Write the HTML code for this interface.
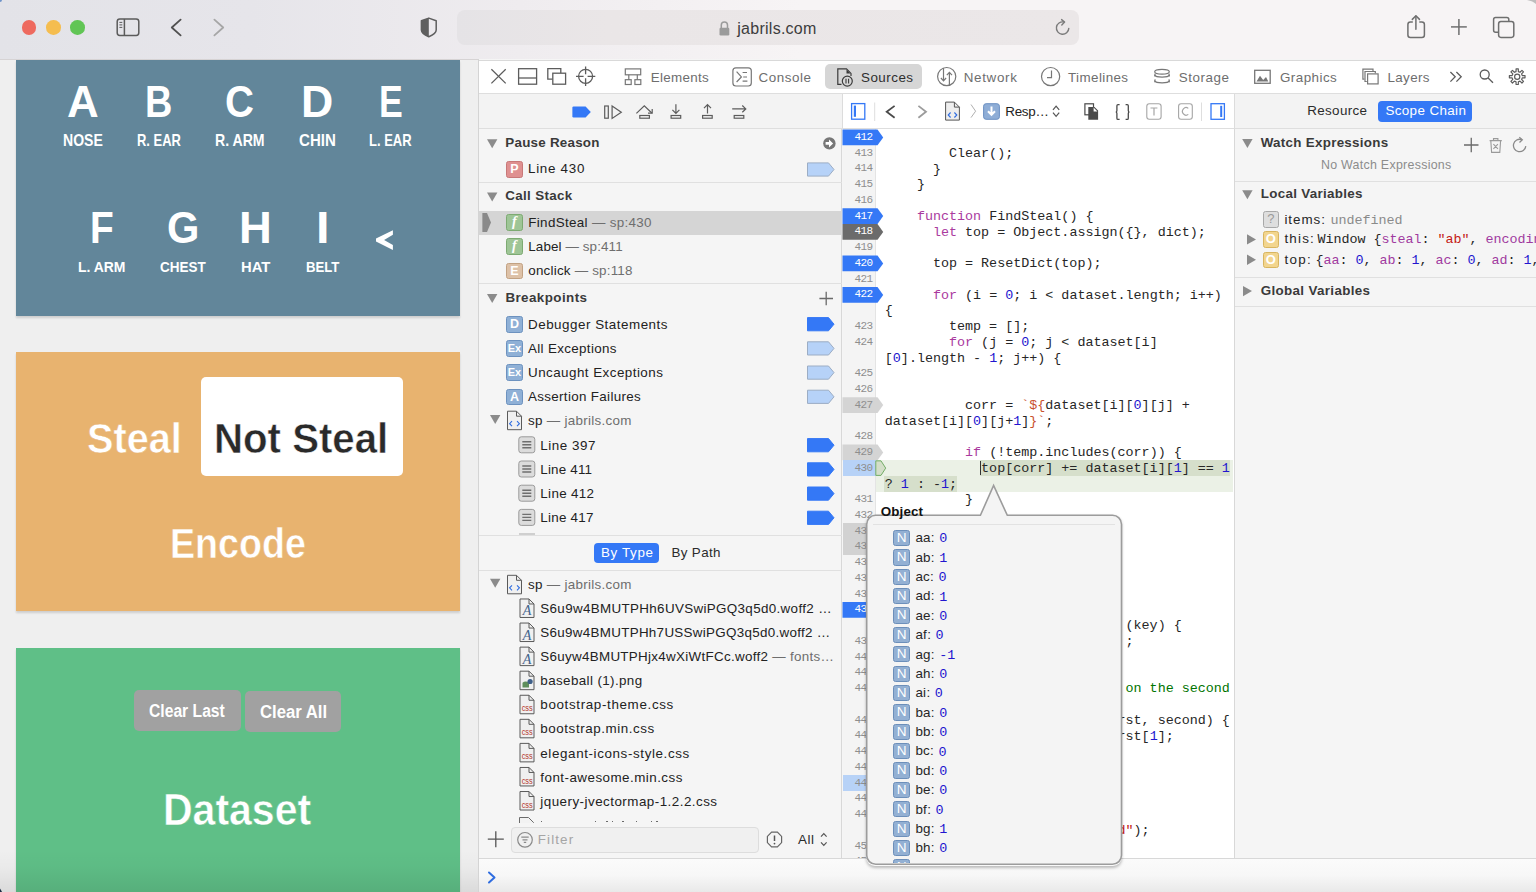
<!DOCTYPE html>
<html><head><meta charset="utf-8"><title>jabrils.com</title>
<style>
*{box-sizing:border-box;margin:0;padding:0}
html,body{width:1536px;height:892px;overflow:hidden;background:#efefef;font-family:"Liberation Sans",sans-serif;position:relative}
.a{position:absolute}
.t{position:absolute;white-space:pre;line-height:1}
svg{position:absolute;overflow:visible}
</style></head><body>

<div class="a" style="left:0;top:0;width:1536px;height:59px;background:linear-gradient(90deg,#e3e3e8 0px,#e6e5ea 250px,#efecef 520px,#f7f4f5 800px,#f7f4f5 1536px)"></div>
<div class="a" style="left:0;top:58.5px;width:1536px;height:1px;background:#d6d3d4"></div>
<div class="a" style="left:21.80px;top:20.4px;width:14.6px;height:14.6px;border-radius:50%;background:#ee6a5f"></div>
<div class="a" style="left:46.00px;top:20.4px;width:14.6px;height:14.6px;border-radius:50%;background:#f5bd4f"></div>
<div class="a" style="left:70.10px;top:20.4px;width:14.6px;height:14.6px;border-radius:50%;background:#61c555"></div>
<svg style="left:0;top:0" width="1536" height="59"><rect x="117.2" y="19" width="21.6" height="16.4" rx="2.6" fill="none" stroke="#5b5b5b" stroke-width="1.5"/><line x1="124.4" y1="19" x2="124.4" y2="35.4" stroke="#5b5b5b" stroke-width="1.5"/><line x1="119.4" y1="22.4" x2="122.3" y2="22.4" stroke="#5b5b5b" stroke-width="1"/><line x1="119.4" y1="24.9" x2="122.3" y2="24.9" stroke="#5b5b5b" stroke-width="1"/><line x1="119.4" y1="27.4" x2="122.3" y2="27.4" stroke="#5b5b5b" stroke-width="1"/><polyline points="180.6,19.6 171.8,27.5 180.6,35.3" fill="none" stroke="#505050" stroke-width="1.8" stroke-linecap="round" stroke-linejoin="round"/><polyline points="214.4,19.6 223.2,27.5 214.4,35.3" fill="none" stroke="#a6a6a6" stroke-width="1.8" stroke-linecap="round" stroke-linejoin="round"/><path d="M428.8,18.1 L421.4,20.7 V30.1 C421.4,32.7 424.6,35.1 428.8,36.8 C433,35.1 436.2,32.7 436.2,30.1 V20.7 Z" fill="none" stroke="#5f5f5f" stroke-width="1.5" stroke-linejoin="round"/><path d="M428.8,18.1 L421.4,20.7 V30.1 C421.4,32.7 424.6,35.1 428.8,36.8 Z" fill="#5f5f5f"/></svg>
<div class="a" style="left:456.5px;top:10.4px;width:622px;height:34.2px;border-radius:8px;background:linear-gradient(90deg,#e5e3e6,#eae6e7 150px,#ebe7e8)"></div>
<svg style="left:0;top:0" width="1536" height="59"><path d="M721.3,28 V25 A3.1,3.1 0 0 1 727.5,25 V28" fill="none" stroke="#9b9b9b" stroke-width="1.5"/><rect x="719.5" y="27.8" width="9.8" height="7.8" rx="1.3" fill="#9b9b9b"/><path d="M1068.8,28.4 A6.2,6.2 0 1 1 1063.8,22" fill="none" stroke="#7b7b7b" stroke-width="1.4" stroke-linecap="round"/><polyline points="1061.6,19.6 1064.6,22.1 1061.8,24.9" fill="none" stroke="#7b7b7b" stroke-width="1.4" stroke-linecap="round" stroke-linejoin="round"/><path d="M1412.8,21.9 H1410.4 A2.5,2.5 0 0 0 1407.9,24.4 V35 A2.5,2.5 0 0 0 1410.4,37.5 H1421.9 A2.5,2.5 0 0 0 1424.4,35 V24.4 A2.5,2.5 0 0 0 1421.9,21.9 H1419.3" fill="none" stroke="#6f6f6f" stroke-width="1.5"/><line x1="1415.9" y1="16.2" x2="1415.9" y2="29.2" stroke="#6f6f6f" stroke-width="1.5" stroke-linecap="round"/><polyline points="1412.3,19.4 1415.9,15.8 1419.5,19.4" fill="none" stroke="#6f6f6f" stroke-width="1.5" stroke-linecap="round" stroke-linejoin="round"/><line x1="1451" y1="26.9" x2="1466.8" y2="26.9" stroke="#6f6f6f" stroke-width="1.5"/><line x1="1458.9" y1="18.9" x2="1458.9" y2="34.9" stroke="#6f6f6f" stroke-width="1.5"/><path d="M1498.2,32.3 H1495.6 A2,2 0 0 1 1493.6,30.3 V19.5 A2,2 0 0 1 1495.6,17.5 H1506.8 A2,2 0 0 1 1508.8,19.5 V21.4" fill="none" stroke="#6f6f6f" stroke-width="1.5"/><rect x="1498.6" y="21.6" width="15.2" height="15.8" rx="2.3" fill="none" stroke="#6f6f6f" stroke-width="1.5"/></svg>
<div class="t" style="left:737.30px;top:21.16px;font-size:16px;color:#3d3d3d;letter-spacing:0.260px;">jabrils.com</div>
<div class="a" style="left:16px;top:59.5px;width:444px;height:256.5px;background:#62869a;box-shadow:0 1.5px 2px rgba(0,0,0,0.14)"></div>
<div class="a" style="left:16px;top:352px;width:444px;height:259px;background:#e8b36f;box-shadow:0 1.5px 2px rgba(0,0,0,0.14)"></div>
<div class="a" style="left:16px;top:647.6px;width:444px;height:260px;background:#5fbf87;box-shadow:0 1.5px 2px rgba(0,0,0,0.14)"></div>
<div class="t" style="left:66.51px;top:79.95px;font-size:44.48px;color:#fff;font-weight:700;transform:scaleX(0.9886);transform-origin:0 0;">A</div>
<div class="t" style="left:145.17px;top:79.95px;font-size:44.48px;color:#fff;font-weight:700;transform:scaleX(0.8516);transform-origin:0 0;">B</div>
<div class="t" style="left:224.96px;top:79.95px;font-size:44.48px;color:#fff;font-weight:700;transform:scaleX(0.9010);transform-origin:0 0;">C</div>
<div class="t" style="left:300.91px;top:79.95px;font-size:44.48px;color:#fff;font-weight:700;transform:scaleX(1.0045);transform-origin:0 0;">D</div>
<div class="t" style="left:378.92px;top:79.95px;font-size:44.48px;color:#fff;font-weight:700;transform:scaleX(0.8015);transform-origin:0 0;">E</div>
<div class="t" style="left:62.76px;top:132.57px;font-size:16.57px;color:#fff;font-weight:700;transform:scaleX(0.8473);transform-origin:0 0;">NOSE</div>
<div class="t" style="left:136.63px;top:132.57px;font-size:16.57px;color:#fff;font-weight:700;transform:scaleX(0.7805);transform-origin:0 0;">R. EAR</div>
<div class="t" style="left:214.66px;top:132.57px;font-size:16.57px;color:#fff;font-weight:700;transform:scaleX(0.8506);transform-origin:0 0;">R. ARM</div>
<div class="t" style="left:298.58px;top:132.57px;font-size:16.57px;color:#fff;font-weight:700;transform:scaleX(0.9094);transform-origin:0 0;">CHIN</div>
<div class="t" style="left:369.43px;top:132.57px;font-size:16.57px;color:#fff;font-weight:700;transform:scaleX(0.7831);transform-origin:0 0;">L. EAR</div>
<div class="t" style="left:89.70px;top:206.00px;font-size:44.19px;color:#fff;font-weight:700;transform:scaleX(0.8788);transform-origin:0 0;">F</div>
<div class="t" style="left:166.59px;top:206.00px;font-size:44.19px;color:#fff;font-weight:700;transform:scaleX(0.9424);transform-origin:0 0;">G</div>
<div class="t" style="left:239.26px;top:206.00px;font-size:44.19px;color:#fff;font-weight:700;transform:scaleX(1.0278);transform-origin:0 0;">H</div>
<div class="t" style="left:315.75px;top:206.00px;font-size:44.19px;color:#fff;font-weight:700;transform:scaleX(1.1000);transform-origin:0 0;">I</div>
<svg style="left:0;top:0" width="1" height="1"><polygon points="392.9,230.2 392.9,234.8 384.1,240.1 392.9,245.0 392.9,249.9 376,241.6 376,238.6" fill="#fff"/></svg>
<div class="t" style="left:77.87px;top:258.96px;font-size:15.41px;color:#fff;font-weight:700;transform:scaleX(0.9043);transform-origin:0 0;">L. ARM</div>
<div class="t" style="left:159.75px;top:258.96px;font-size:15.41px;color:#fff;font-weight:700;transform:scaleX(0.8751);transform-origin:0 0;">CHEST</div>
<div class="t" style="left:240.61px;top:258.96px;font-size:15.41px;color:#fff;font-weight:700;transform:scaleX(0.9616);transform-origin:0 0;">HAT</div>
<div class="t" style="left:305.62px;top:258.96px;font-size:15.41px;color:#fff;font-weight:700;transform:scaleX(0.8552);transform-origin:0 0;">BELT</div>
<div class="a" style="left:200.7px;top:376.5px;width:202px;height:99px;border-radius:5px;background:#fff"></div>
<div class="t" style="left:87.11px;top:418.13px;font-size:42.20px;color:#fff;font-weight:700;transform:scaleX(0.9405);transform-origin:0 0;-webkit-text-stroke:0.5px #e8b36f;">Steal</div>
<div class="t" style="left:214.26px;top:418.13px;font-size:42.20px;color:#2a2a2a;font-weight:700;transform:scaleX(0.9527);transform-origin:0 0;-webkit-text-stroke:0.5px #fff;">Not Steal</div>
<div class="t" style="left:169.63px;top:523.49px;font-size:41.78px;color:#fff;font-weight:700;transform:scaleX(0.9006);transform-origin:0 0;-webkit-text-stroke:0.5px #e8b36f;">Encode</div>
<div class="a" style="left:134.4px;top:690.3px;width:106.9px;height:40.7px;border-radius:5px;background:#a1a1a1"></div>
<div class="a" style="left:244.7px;top:691.3px;width:95.9px;height:40.7px;border-radius:5px;background:#a1a1a1"></div>
<div class="t" style="left:149.36px;top:701.27px;font-size:19.17px;color:#fff;font-weight:700;transform:scaleX(0.8182);transform-origin:0 0;">Clear Last</div>
<div class="t" style="left:259.61px;top:702.17px;font-size:19.17px;color:#fff;font-weight:700;transform:scaleX(0.8717);transform-origin:0 0;">Clear All</div>
<div class="t" style="left:162.61px;top:787.57px;font-size:44.15px;color:#fff;font-weight:700;transform:scaleX(0.9286);transform-origin:0 0;-webkit-text-stroke:0.5px #5fbf87;">Dataset</div>
<div class="a" style="left:0;top:850px;width:478px;height:42px;background:linear-gradient(180deg,rgba(0,0,0,0),rgba(0,0,0,0.02) 40%,rgba(0,0,0,0.085))"></div>
<div class="a" style="left:478px;top:59px;width:1058px;height:833px;background:#f5f5f5;border-left:1px solid #d4d4d4"></div>
<div class="a" style="left:479px;top:59.5px;width:1057px;height:34px;background:#fff;border-top:1px solid #d9d9d9;border-bottom:1px solid #dedede"></div>
<div class="a" style="left:825px;top:64.3px;width:96.7px;height:25px;border-radius:5px;background:#d6d6d6"></div>
<div class="t" style="left:650.70px;top:70.56px;font-size:13.4px;color:#6e6e6e;letter-spacing:0.318px;">Elements</div>
<div class="t" style="left:758.50px;top:70.56px;font-size:13.4px;color:#6e6e6e;letter-spacing:0.568px;">Console</div>
<div class="t" style="left:861.00px;top:70.56px;font-size:13.4px;color:#2e2e2e;letter-spacing:0.489px;">Sources</div>
<div class="t" style="left:963.70px;top:70.56px;font-size:13.4px;color:#6e6e6e;letter-spacing:0.689px;">Network</div>
<div class="t" style="left:1068.00px;top:70.56px;font-size:13.4px;color:#6e6e6e;letter-spacing:0.406px;">Timelines</div>
<div class="t" style="left:1178.80px;top:70.56px;font-size:13.4px;color:#6e6e6e;letter-spacing:0.545px;">Storage</div>
<div class="t" style="left:1280.00px;top:70.56px;font-size:13.4px;color:#6e6e6e;letter-spacing:0.448px;">Graphics</div>
<div class="t" style="left:1387.40px;top:70.56px;font-size:13.4px;color:#6e6e6e;letter-spacing:0.392px;">Layers</div>
<div class="a" style="left:479px;top:93.5px;width:363px;height:35.5px;background:#f3f3f3;border-bottom:1px solid #dedede"></div>
<div class="a" style="left:842px;top:93.5px;width:392px;height:35.5px;background:#fff;border-left:1px solid #dcdcdc;border-bottom:1px solid #dedede"></div>
<div class="a" style="left:1234px;top:93.5px;width:302px;height:35.5px;background:#f3f3f3;border-left:1px solid #dcdcdc;border-bottom:1px solid #dedede"></div>
<div class="t" style="left:1307.30px;top:104.26px;font-size:13.4px;color:#2b2b2b;letter-spacing:0.335px;">Resource</div>
<div class="a" style="left:1378px;top:101px;width:94.3px;height:21px;border-radius:4px;background:#3478f6"></div>
<div class="t" style="left:1385.40px;top:104.26px;font-size:13.4px;color:#fff;letter-spacing:0.385px;">Scope Chain</div>
<div class="a" style="left:479px;top:129px;width:363px;height:729px;background:#f5f5f5;border-right:1px solid #d8d8d8"></div>
<div class="a" style="left:479px;top:181.5px;width:363px;height:1px;background:#e0e0e0"></div>
<div class="a" style="left:479px;top:283.2px;width:363px;height:1px;background:#e0e0e0"></div>
<div class="a" style="left:479px;top:535.2px;width:363px;height:1px;background:#e0e0e0"></div>
<div class="a" style="left:479px;top:569.5px;width:363px;height:1px;background:#e0e0e0"></div>
<div class="a" style="left:479px;top:857.7px;width:363px;height:1px;background:#d9d9d9"></div>
<div class="a" style="left:479px;top:211px;width:362px;height:23.5px;background:#d5d5d5"></div>
<svg style="left:0;top:0" width="1" height="1"><polygon points="487,139.2 497.4,139.2 492.2,148.2" fill="#8b8b8b"/></svg>
<div class="t" style="left:505.30px;top:136.46px;font-size:13.4px;color:#3a3a3a;font-weight:700;letter-spacing:0.238px;">Pause Reason</div>
<svg style="left:0;top:0" width="1" height="1"><polygon points="487,192.5 497.4,192.5 492.2,201.5" fill="#8b8b8b"/></svg>
<div class="t" style="left:505.30px;top:188.96px;font-size:13.4px;color:#3a3a3a;font-weight:700;letter-spacing:0.320px;">Call Stack</div>
<svg style="left:0;top:0" width="1" height="1"><polygon points="487,294 497.4,294 492.2,303" fill="#8b8b8b"/></svg>
<div class="t" style="left:505.40px;top:290.66px;font-size:13.4px;color:#3a3a3a;font-weight:700;letter-spacing:0.420px;">Breakpoints</div>
<div class="a" style="left:506px;top:161.2px;width:16.8px;height:16.8px;border-radius:2.5px;background:#df9090;border:1px solid #c87878;color:#fff;font-family:'Liberation Sans',sans-serif;font-size:12.5px;font-weight:700;line-height:14.8px;text-align:center;">P</div>
<div class="t" style="left:528.00px;top:162.46px;font-size:13.4px;color:#222;letter-spacing:0.715px;">Line 430</div>
<svg style="left:0;top:0" width="1" height="1"><polygon points="482.4,213 487,213 491,222.5 487,232 482.4,232" fill="#8a8a8a"/></svg>
<div class="a" style="left:506px;top:214px;width:16.8px;height:16.8px;border-radius:2.5px;background:#9ec596;border:1px solid #7daa72;color:#fff;font-family:'Liberation Serif',serif;font-size:14px;font-weight:700;line-height:14.8px;text-align:center;font-style:italic;">f</div>
<div class="a" style="left:506px;top:238.2px;width:16.8px;height:16.8px;border-radius:2.5px;background:#9ec596;border:1px solid #7daa72;color:#fff;font-family:'Liberation Serif',serif;font-size:14px;font-weight:700;line-height:14.8px;text-align:center;font-style:italic;">f</div>
<div class="a" style="left:506px;top:262.6px;width:16.8px;height:16.8px;border-radius:2.5px;background:#ddc1a7;border:1px solid #c2a283;color:#fff;font-family:'Liberation Sans',sans-serif;font-size:12.5px;font-weight:700;line-height:14.8px;text-align:center;">E</div>
<div class="t" style="left:528.30px;top:216.26px;font-size:13.4px;color:#222;letter-spacing:0.331px;"><span style="color:#222">FindSteal</span><span style="color:#6e6e6e"> — sp:430</span></div>
<div class="t" style="left:528.30px;top:240.26px;font-size:13.4px;color:#222;letter-spacing:0.114px;"><span style="color:#222">Label</span><span style="color:#6e6e6e"> — sp:411</span></div>
<div class="t" style="left:528.30px;top:264.36px;font-size:13.4px;color:#222;letter-spacing:0.213px;"><span style="color:#222">onclick</span><span style="color:#6e6e6e"> — sp:118</span></div>
<svg style="left:0;top:0" width="1" height="1"><polygon points="807.5,162.9 828.5,162.9 834.0,169.5 828.5,176.1 807.5,176.1" fill="#b6d2f8" stroke="#9cadc4" stroke-width="1"/></svg>
<svg style="left:0;top:0" width="1" height="1"><circle cx="829.4" cy="143.4" r="6.2" fill="#777"/><path d="M825.6,142.1 H829 V139.4 L833.1,143.4 L829,147.4 V144.7 H825.6 Z" fill="#fff"/></svg>
<svg style="left:0;top:0" width="1" height="1"><path d="M819.4,298.5 H833 M826.2,291.7 V305.3" stroke="#6a6a6a" stroke-width="1.3"/></svg>
<div class="a" style="left:506px;top:316.0px;width:16.8px;height:16.8px;border-radius:2.5px;background:#8fb0d6;border:1px solid #6d92bf;color:#fff;font-family:'Liberation Sans',sans-serif;font-size:12.5px;font-weight:700;line-height:14.8px;text-align:center;">D</div>
<div class="t" style="left:528.00px;top:317.56px;font-size:13.4px;color:#222;letter-spacing:0.512px;">Debugger Statements</div>
<svg style="left:0;top:0" width="1" height="1"><polygon points="807.5,317.59999999999997 828.5,317.59999999999997 834.0,324.2 828.5,330.79999999999995 807.5,330.79999999999995" fill="#3478f6" stroke="#3478f6" stroke-width="1"/></svg>
<div class="a" style="left:506px;top:340.2px;width:16.8px;height:16.8px;border-radius:2.5px;background:#8fb0d6;border:1px solid #6d92bf;color:#fff;font-family:'Liberation Sans',sans-serif;font-size:11px;font-weight:700;line-height:14.8px;text-align:center;">Ex</div>
<div class="t" style="left:528.00px;top:341.76px;font-size:13.4px;color:#222;letter-spacing:0.334px;">All Exceptions</div>
<svg style="left:0;top:0" width="1" height="1"><polygon points="807.5,341.79999999999995 828.5,341.79999999999995 834.0,348.4 828.5,354.99999999999994 807.5,354.99999999999994" fill="#b6d2f8" stroke="#9cadc4" stroke-width="1"/></svg>
<div class="a" style="left:506px;top:364.4px;width:16.8px;height:16.8px;border-radius:2.5px;background:#8fb0d6;border:1px solid #6d92bf;color:#fff;font-family:'Liberation Sans',sans-serif;font-size:11px;font-weight:700;line-height:14.8px;text-align:center;">Ex</div>
<div class="t" style="left:528.00px;top:365.96px;font-size:13.4px;color:#222;letter-spacing:0.460px;">Uncaught Exceptions</div>
<svg style="left:0;top:0" width="1" height="1"><polygon points="807.5,365.99999999999994 828.5,365.99999999999994 834.0,372.59999999999997 828.5,379.19999999999993 807.5,379.19999999999993" fill="#b6d2f8" stroke="#9cadc4" stroke-width="1"/></svg>
<div class="a" style="left:506px;top:388.6px;width:16.8px;height:16.8px;border-radius:2.5px;background:#8fb0d6;border:1px solid #6d92bf;color:#fff;font-family:'Liberation Sans',sans-serif;font-size:12.5px;font-weight:700;line-height:14.8px;text-align:center;">A</div>
<div class="t" style="left:528.00px;top:390.16px;font-size:13.4px;color:#222;letter-spacing:0.327px;">Assertion Failures</div>
<svg style="left:0;top:0" width="1" height="1"><polygon points="807.5,390.2 828.5,390.2 834.0,396.8 828.5,403.4 807.5,403.4" fill="#b6d2f8" stroke="#9cadc4" stroke-width="1"/></svg>
<svg style="left:0;top:0" width="1" height="1"><polygon points="490,414.9 500.4,414.9 495.2,423.9" fill="#8b8b8b"/></svg>
<svg style="left:0;top:0" width="1" height="1"><path d="M507.5,411.2 H516.5 L521.5,416.2 V429.7 H507.5 Z" fill="#f0f0f0" stroke="#5a5a5a" stroke-width="1"/><path d="M516.5,411.2 V416.2 H521.5" fill="none" stroke="#5a5a5a" stroke-width="1"/><path d="M512,421.2 L509.6,423.7 L512,426.2 M517,421.2 L519.4,423.7 L517,426.2" fill="none" stroke="#2f6de0" stroke-width="1.1"/></svg>
<div class="t" style="left:528.00px;top:414.36px;font-size:13.4px;color:#222;letter-spacing:0.301px;"><span style="color:#222">sp</span><span style="color:#6e6e6e"> — jabrils.com</span></div>
<svg style="left:0;top:0" width="1" height="1"><rect x="518.8" y="436.79999999999995" width="16" height="16" rx="2.5" fill="#dcdcdc" stroke="#9a9a9a" stroke-width="1"/><path d="M522.3,441.79999999999995 H531.3 M522.3,444.79999999999995 H531.3 M522.3,447.79999999999995 H531.3" stroke="#6f6f6f" stroke-width="1.4"/></svg>
<div class="t" style="left:540.30px;top:438.56px;font-size:13.4px;color:#222;letter-spacing:0.537px;">Line 397</div>
<svg style="left:0;top:0" width="1" height="1"><polygon points="807.5,438.59999999999997 828.5,438.59999999999997 834.0,445.2 828.5,451.79999999999995 807.5,451.79999999999995" fill="#3478f6" stroke="#3478f6" stroke-width="1"/></svg>
<svg style="left:0;top:0" width="1" height="1"><rect x="518.8" y="460.99999999999994" width="16" height="16" rx="2.5" fill="#dcdcdc" stroke="#9a9a9a" stroke-width="1"/><path d="M522.3,465.99999999999994 H531.3 M522.3,468.99999999999994 H531.3 M522.3,471.99999999999994 H531.3" stroke="#6f6f6f" stroke-width="1.4"/></svg>
<div class="t" style="left:540.30px;top:462.76px;font-size:13.4px;color:#222;letter-spacing:0.190px;">Line 411</div>
<svg style="left:0;top:0" width="1" height="1"><polygon points="807.5,462.79999999999995 828.5,462.79999999999995 834.0,469.4 828.5,475.99999999999994 807.5,475.99999999999994" fill="#3478f6" stroke="#3478f6" stroke-width="1"/></svg>
<svg style="left:0;top:0" width="1" height="1"><rect x="518.8" y="485.19999999999993" width="16" height="16" rx="2.5" fill="#dcdcdc" stroke="#9a9a9a" stroke-width="1"/><path d="M522.3,490.19999999999993 H531.3 M522.3,493.19999999999993 H531.3 M522.3,496.19999999999993 H531.3" stroke="#6f6f6f" stroke-width="1.4"/></svg>
<div class="t" style="left:540.30px;top:486.96px;font-size:13.4px;color:#222;letter-spacing:0.337px;">Line 412</div>
<svg style="left:0;top:0" width="1" height="1"><polygon points="807.5,486.99999999999994 828.5,486.99999999999994 834.0,493.59999999999997 828.5,500.19999999999993 807.5,500.19999999999993" fill="#3478f6" stroke="#3478f6" stroke-width="1"/></svg>
<svg style="left:0;top:0" width="1" height="1"><rect x="518.8" y="509.4" width="16" height="16" rx="2.5" fill="#dcdcdc" stroke="#9a9a9a" stroke-width="1"/><path d="M522.3,514.4 H531.3 M522.3,517.4 H531.3 M522.3,520.4 H531.3" stroke="#6f6f6f" stroke-width="1.4"/></svg>
<div class="t" style="left:540.30px;top:511.16px;font-size:13.4px;color:#222;letter-spacing:0.251px;">Line 417</div>
<svg style="left:0;top:0" width="1" height="1"><polygon points="807.5,511.2 828.5,511.2 834.0,517.8 828.5,524.4 807.5,524.4" fill="#3478f6" stroke="#3478f6" stroke-width="1"/></svg>
<div class="a" style="left:518.8px;top:533px;width:16px;height:2px;background:#cfcfcf"></div>
<div class="a" style="left:593.9px;top:543px;width:64.8px;height:20px;border-radius:4px;background:#3478f6"></div>
<div class="t" style="left:600.90px;top:545.56px;font-size:13.4px;color:#fff;letter-spacing:0.654px;">By Type</div>
<div class="t" style="left:671.40px;top:545.56px;font-size:13.4px;color:#2b2b2b;letter-spacing:0.374px;">By Path</div>
<svg style="left:0;top:0" width="1" height="1"><polygon points="490,578.8 500.4,578.8 495.2,587.8" fill="#8b8b8b"/></svg>
<svg style="left:0;top:0" width="1" height="1"><path d="M507.5,575.3 H516.5 L521.5,580.3 V593.8 H507.5 Z" fill="#f0f0f0" stroke="#5a5a5a" stroke-width="1"/><path d="M516.5,575.3 V580.3 H521.5" fill="none" stroke="#5a5a5a" stroke-width="1"/><path d="M512,585.3 L509.6,587.8 L512,590.3 M517,585.3 L519.4,587.8 L517,590.3" fill="none" stroke="#2f6de0" stroke-width="1.1"/></svg>
<div class="t" style="left:528.00px;top:578.06px;font-size:13.4px;color:#222;letter-spacing:0.301px;"><span style="color:#222">sp</span><span style="color:#6e6e6e"> — jabrils.com</span></div>
<svg style="left:0;top:0" width="1" height="1"><path d="M520.0,598.97 H529.0 L534.0,603.97 V617.47 H520.0 Z" fill="#f0f0f0" stroke="#5a5a5a" stroke-width="1"/><path d="M529.0,598.97 V603.97 H534.0" fill="none" stroke="#5a5a5a" stroke-width="1"/><text x="527.0" y="615.47" font-family="Liberation Serif" font-style="italic" font-size="14" fill="#44648c" text-anchor="middle">A</text></svg>
<div class="t" style="left:540.30px;top:602.13px;font-size:13.4px;color:#222;letter-spacing:0.342px;"><span style="color:#222">S6u9w4BMUTPHh6UVSwiPGQ3q5d0.woff2 …</span></div>
<svg style="left:0;top:0" width="1" height="1"><path d="M520.0,623.04 H529.0 L534.0,628.04 V641.54 H520.0 Z" fill="#f0f0f0" stroke="#5a5a5a" stroke-width="1"/><path d="M529.0,623.04 V628.04 H534.0" fill="none" stroke="#5a5a5a" stroke-width="1"/><text x="527.0" y="639.54" font-family="Liberation Serif" font-style="italic" font-size="14" fill="#44648c" text-anchor="middle">A</text></svg>
<div class="t" style="left:540.30px;top:626.20px;font-size:13.4px;color:#222;letter-spacing:0.304px;"><span style="color:#222">S6u9w4BMUTPHh7USSwiPGQ3q5d0.woff2 …</span></div>
<svg style="left:0;top:0" width="1" height="1"><path d="M520.0,647.11 H529.0 L534.0,652.11 V665.61 H520.0 Z" fill="#f0f0f0" stroke="#5a5a5a" stroke-width="1"/><path d="M529.0,647.11 V652.11 H534.0" fill="none" stroke="#5a5a5a" stroke-width="1"/><text x="527.0" y="663.61" font-family="Liberation Serif" font-style="italic" font-size="14" fill="#44648c" text-anchor="middle">A</text></svg>
<div class="t" style="left:540.30px;top:650.27px;font-size:13.4px;color:#222;letter-spacing:0.298px;"><span style="color:#222">S6uyw4BMUTPHjx4wXiWtFCc.woff2</span><span style="color:#6e6e6e"> — fonts…</span></div>
<svg style="left:0;top:0" width="1" height="1"><path d="M520.0,671.18 H529.0 L534.0,676.18 V689.68 H520.0 Z" fill="#f0f0f0" stroke="#5a5a5a" stroke-width="1"/><path d="M529.0,671.18 V676.18 H534.0" fill="none" stroke="#5a5a5a" stroke-width="1"/><path d="M522.5,682.68 Q525.5,680.18 529.0,682.68 V687.4799999999999 H522.5 Z" fill="#5f8f5c"/><circle cx="530.1" cy="681.4799999999999" r="2.6" fill="#3e5f88"/></svg>
<div class="t" style="left:540.30px;top:674.34px;font-size:13.4px;color:#222;letter-spacing:0.388px;"><span style="color:#222">baseball (1).png</span></div>
<svg style="left:0;top:0" width="1" height="1"><path d="M520.0,695.25 H529.0 L534.0,700.25 V713.75 H520.0 Z" fill="#f0f0f0" stroke="#5a5a5a" stroke-width="1"/><path d="M529.0,695.25 V700.25 H534.0" fill="none" stroke="#5a5a5a" stroke-width="1"/><text x="527.2" y="711.35" font-family="Liberation Sans" font-size="8.6" fill="#b3352b" text-anchor="middle" font-weight="400" textLength="11" lengthAdjust="spacingAndGlyphs">css</text></svg>
<div class="t" style="left:540.30px;top:698.41px;font-size:13.4px;color:#222;letter-spacing:0.647px;"><span style="color:#222">bootstrap-theme.css</span></div>
<svg style="left:0;top:0" width="1" height="1"><path d="M520.0,719.3199999999999 H529.0 L534.0,724.3199999999999 V737.8199999999999 H520.0 Z" fill="#f0f0f0" stroke="#5a5a5a" stroke-width="1"/><path d="M529.0,719.3199999999999 V724.3199999999999 H534.0" fill="none" stroke="#5a5a5a" stroke-width="1"/><text x="527.2" y="735.42" font-family="Liberation Sans" font-size="8.6" fill="#b3352b" text-anchor="middle" font-weight="400" textLength="11" lengthAdjust="spacingAndGlyphs">css</text></svg>
<div class="t" style="left:540.30px;top:722.48px;font-size:13.4px;color:#222;letter-spacing:0.565px;"><span style="color:#222">bootstrap.min.css</span></div>
<svg style="left:0;top:0" width="1" height="1"><path d="M520.0,743.39 H529.0 L534.0,748.39 V761.89 H520.0 Z" fill="#f0f0f0" stroke="#5a5a5a" stroke-width="1"/><path d="M529.0,743.39 V748.39 H534.0" fill="none" stroke="#5a5a5a" stroke-width="1"/><text x="527.2" y="759.49" font-family="Liberation Sans" font-size="8.6" fill="#b3352b" text-anchor="middle" font-weight="400" textLength="11" lengthAdjust="spacingAndGlyphs">css</text></svg>
<div class="t" style="left:540.30px;top:746.55px;font-size:13.4px;color:#222;letter-spacing:0.614px;"><span style="color:#222">elegant-icons-style.css</span></div>
<svg style="left:0;top:0" width="1" height="1"><path d="M520.0,767.46 H529.0 L534.0,772.46 V785.96 H520.0 Z" fill="#f0f0f0" stroke="#5a5a5a" stroke-width="1"/><path d="M529.0,767.46 V772.46 H534.0" fill="none" stroke="#5a5a5a" stroke-width="1"/><text x="527.2" y="783.5600000000001" font-family="Liberation Sans" font-size="8.6" fill="#b3352b" text-anchor="middle" font-weight="400" textLength="11" lengthAdjust="spacingAndGlyphs">css</text></svg>
<div class="t" style="left:540.30px;top:770.62px;font-size:13.4px;color:#222;letter-spacing:0.467px;"><span style="color:#222">font-awesome.min.css</span></div>
<svg style="left:0;top:0" width="1" height="1"><path d="M520.0,791.53 H529.0 L534.0,796.53 V810.03 H520.0 Z" fill="#f0f0f0" stroke="#5a5a5a" stroke-width="1"/><path d="M529.0,791.53 V796.53 H534.0" fill="none" stroke="#5a5a5a" stroke-width="1"/><text x="527.2" y="807.63" font-family="Liberation Sans" font-size="8.6" fill="#b3352b" text-anchor="middle" font-weight="400" textLength="11" lengthAdjust="spacingAndGlyphs">css</text></svg>
<div class="t" style="left:540.30px;top:794.69px;font-size:13.4px;color:#222;letter-spacing:0.472px;"><span style="color:#222">jquery-jvectormap-1.2.2.css</span></div>
<div class="a" style="left:519px;top:816.5px;width:16px;height:6px;overflow:hidden"><svg style="left:0;top:0" width="16" height="20"><path d="M0.5,0.5 H9.5 L14.5,5.5 V19 H0.5 Z" fill="#f2f2f2" stroke="#6b6b6b"/></svg></div>
<div class="a" style="left:541.1px;top:820.6px;width:1.4px;height:1.8px;background:#6a6a6a"></div><div class="a" style="left:594.9px;top:820.6px;width:1.4px;height:1.8px;background:#6a6a6a"></div><div class="a" style="left:606.2px;top:820.6px;width:1.4px;height:1.8px;background:#6a6a6a"></div><div class="a" style="left:612px;top:820.6px;width:1.4px;height:1.8px;background:#6a6a6a"></div><div class="a" style="left:622.3px;top:820.6px;width:1.4px;height:1.8px;background:#6a6a6a"></div><div class="a" style="left:635.5px;top:820.6px;width:1.4px;height:1.8px;background:#6a6a6a"></div><div class="a" style="left:650.6px;top:820.6px;width:1.4px;height:1.8px;background:#6a6a6a"></div><div class="a" style="left:656.2px;top:820.6px;width:1.4px;height:1.8px;background:#6a6a6a"></div>
<div class="a" style="left:479px;top:822.5px;width:362px;height:35px;background:#f5f5f5"></div>
<svg style="left:0;top:0" width="1" height="1"><path d="M487.8,839.2 H503.8 M495.8,831.2 V847.2" stroke="#555" stroke-width="1.3"/></svg>
<div class="a" style="left:511.3px;top:827.3px;width:247.5px;height:25.3px;border-radius:4px;background:#f0f0f0;border:1px solid #dddddd"></div>
<svg style="left:0;top:0" width="1" height="1"><circle cx="525" cy="839.8" r="7.3" fill="none" stroke="#8a8a8a" stroke-width="1.2"/><path d="M521.3,837.2 H528.7 M522.5,839.8 H527.5 M523.8,842.4 H526.2" stroke="#8a8a8a" stroke-width="1.2"/></svg>
<div class="t" style="left:537.80px;top:833.26px;font-size:13.4px;color:#a5a5a5;letter-spacing:1.109px;">Filter</div>
<svg style="left:0;top:0" width="1" height="1"><polygon points="771.6,832.2 777.4,832.2 781.6,836.4 781.6,842.6 777.4,846.8 771.6,846.8 767.4,842.6 767.4,836.4" fill="none" stroke="#666" stroke-width="1.2"/><path d="M774.5,835.5 V841" stroke="#555" stroke-width="1.5"/><circle cx="774.5" cy="843.6" r="0.9" fill="#555"/></svg>
<div class="t" style="left:798.00px;top:833.26px;font-size:13.4px;color:#2b2b2b;letter-spacing:0.515px;">All</div>
<svg style="left:0;top:0" width="1" height="1"><path d="M821,836.6 L823.8,833.6 L826.6,836.6 M821,842.4 L823.8,845.4 L826.6,842.4" fill="none" stroke="#555" stroke-width="1.2"/></svg>
<div class="a" style="left:842.5px;top:129px;width:391.0px;height:729px;background:#fff;overflow:hidden"></div>
<div class="a" style="left:842.5px;top:129px;width:33.0px;height:729px;background:#f4f4f4;border-right:1px solid #e4e4e4"></div>
<div class="a" style="left:876.0px;top:460.25px;width:357.0px;height:31.50px;background:#ebf1e6"></div>
<div class="a" style="left:980.16px;top:460.25px;width:249.84px;height:15.75px;background:#d6dfcb"></div>
<div class="a" style="left:883.80px;top:476.00px;width:73.27px;height:15.75px;background:#d6dfcb"></div>
<div class="a" style="left:980.16px;top:461.25px;width:1px;height:13.75px;background:#333"></div>
<svg style="left:0;top:0" width="1" height="1"><polygon points="842.5,129.50 877.5,129.50 883.2,137.38 877.5,145.25 842.5,145.25" fill="#3478f6"/></svg>
<svg style="left:0;top:0" width="1" height="1"><polygon points="842.5,208.25 877.5,208.25 883.2,216.12 877.5,224.00 842.5,224.00" fill="#3478f6"/></svg>
<svg style="left:0;top:0" width="1" height="1"><polygon points="842.5,224.00 877.5,224.00 883.2,231.88 877.5,239.75 842.5,239.75" fill="#6b6b6b"/></svg>
<svg style="left:0;top:0" width="1" height="1"><polygon points="842.5,255.50 877.5,255.50 883.2,263.38 877.5,271.25 842.5,271.25" fill="#3478f6"/></svg>
<svg style="left:0;top:0" width="1" height="1"><polygon points="842.5,287.00 877.5,287.00 883.2,294.88 877.5,302.75 842.5,302.75" fill="#3478f6"/></svg>
<svg style="left:0;top:0" width="1" height="1"><polygon points="842.5,397.25 877.5,397.25 883.2,405.12 877.5,413.00 842.5,413.00" fill="#d4d4d4"/></svg>
<svg style="left:0;top:0" width="1" height="1"><polygon points="842.5,444.50 877.5,444.50 883.2,452.38 877.5,460.25 842.5,460.25" fill="#d4d4d4"/></svg>
<svg style="left:0;top:0" width="1" height="1"><polygon points="842.5,602.00 877.5,602.00 883.2,609.88 877.5,617.75 842.5,617.75" fill="#3478f6"/></svg>
<div class="a" style="left:842.5px;top:460.25px;width:33.0px;height:15.75px;background:#b7d2f7"></div>
<div class="a" style="left:842.5px;top:523.25px;width:33.0px;height:31.50px;background:#d2d2d2"></div>
<div class="a" style="left:842.5px;top:775.25px;width:33.0px;height:15.75px;background:#b7d2f7"></div>
<svg style="left:0;top:0" width="1" height="1"><polygon points="875.8,460.85 881.0,460.85 885.7,468.12 881.0,475.40 875.8,475.40" fill="#d3dec8" stroke="#73ad67" stroke-width="1"/></svg>
<div class="t" style="left:854.45px;top:131.82px;font-size:11px;color:#fff;font-family:'Liberation Mono',monospace;letter-spacing:-0.550px;">412</div>
<div class="t" style="left:854.45px;top:147.57px;font-size:11px;color:#8e8e8e;font-family:'Liberation Mono',monospace;letter-spacing:-0.550px;">413</div>
<div class="t" style="left:884.80px;top:146.93px;font-size:13.4px;color:#222;font-family:'Liberation Mono',monospace;letter-spacing:-0.011px;"><span style="color:#262626">        Clear();</span></div>
<div class="t" style="left:854.45px;top:163.32px;font-size:11px;color:#8e8e8e;font-family:'Liberation Mono',monospace;letter-spacing:-0.550px;">414</div>
<div class="t" style="left:884.80px;top:162.68px;font-size:13.4px;color:#222;font-family:'Liberation Mono',monospace;letter-spacing:-0.011px;"><span style="color:#262626">      }</span></div>
<div class="t" style="left:854.45px;top:179.07px;font-size:11px;color:#8e8e8e;font-family:'Liberation Mono',monospace;letter-spacing:-0.550px;">415</div>
<div class="t" style="left:884.80px;top:178.43px;font-size:13.4px;color:#222;font-family:'Liberation Mono',monospace;letter-spacing:-0.011px;"><span style="color:#262626">    }</span></div>
<div class="t" style="left:854.45px;top:194.82px;font-size:11px;color:#8e8e8e;font-family:'Liberation Mono',monospace;letter-spacing:-0.550px;">416</div>
<div class="t" style="left:854.45px;top:210.57px;font-size:11px;color:#fff;font-family:'Liberation Mono',monospace;letter-spacing:-0.550px;">417</div>
<div class="t" style="left:884.80px;top:209.93px;font-size:13.4px;color:#222;font-family:'Liberation Mono',monospace;letter-spacing:-0.011px;"><span style="color:#262626">    </span><span style="color:#aa3a9e">function</span><span style="color:#262626"> FindSteal() {</span></div>
<div class="t" style="left:854.45px;top:226.32px;font-size:11px;color:#fff;font-family:'Liberation Mono',monospace;letter-spacing:-0.550px;">418</div>
<div class="t" style="left:884.80px;top:225.68px;font-size:13.4px;color:#222;font-family:'Liberation Mono',monospace;letter-spacing:-0.011px;"><span style="color:#262626">      </span><span style="color:#aa3a9e">let</span><span style="color:#262626"> top = Object.assign({}, dict);</span></div>
<div class="t" style="left:854.45px;top:242.07px;font-size:11px;color:#8e8e8e;font-family:'Liberation Mono',monospace;letter-spacing:-0.550px;">419</div>
<div class="t" style="left:854.45px;top:257.82px;font-size:11px;color:#fff;font-family:'Liberation Mono',monospace;letter-spacing:-0.550px;">420</div>
<div class="t" style="left:884.80px;top:257.18px;font-size:13.4px;color:#222;font-family:'Liberation Mono',monospace;letter-spacing:-0.011px;"><span style="color:#262626">      top = ResetDict(top);</span></div>
<div class="t" style="left:854.45px;top:273.57px;font-size:11px;color:#8e8e8e;font-family:'Liberation Mono',monospace;letter-spacing:-0.550px;">421</div>
<div class="t" style="left:854.45px;top:289.32px;font-size:11px;color:#fff;font-family:'Liberation Mono',monospace;letter-spacing:-0.550px;">422</div>
<div class="t" style="left:884.80px;top:288.68px;font-size:13.4px;color:#222;font-family:'Liberation Mono',monospace;letter-spacing:-0.011px;"><span style="color:#262626">      </span><span style="color:#aa3a9e">for</span><span style="color:#262626"> (i = </span><span style="color:#2215cf">0</span><span style="color:#262626">; i &lt; dataset.length; i++)</span></div>
<div class="t" style="left:884.80px;top:304.43px;font-size:13.4px;color:#222;font-family:'Liberation Mono',monospace;letter-spacing:-0.011px;"><span style="color:#262626">{</span></div>
<div class="t" style="left:854.45px;top:320.82px;font-size:11px;color:#8e8e8e;font-family:'Liberation Mono',monospace;letter-spacing:-0.550px;">423</div>
<div class="t" style="left:884.80px;top:320.18px;font-size:13.4px;color:#222;font-family:'Liberation Mono',monospace;letter-spacing:-0.011px;"><span style="color:#262626">        temp = [];</span></div>
<div class="t" style="left:854.45px;top:336.57px;font-size:11px;color:#8e8e8e;font-family:'Liberation Mono',monospace;letter-spacing:-0.550px;">424</div>
<div class="t" style="left:884.80px;top:335.93px;font-size:13.4px;color:#222;font-family:'Liberation Mono',monospace;letter-spacing:-0.011px;"><span style="color:#262626">        </span><span style="color:#aa3a9e">for</span><span style="color:#262626"> (j = </span><span style="color:#2215cf">0</span><span style="color:#262626">; j &lt; dataset[i]</span></div>
<div class="t" style="left:884.80px;top:351.68px;font-size:13.4px;color:#222;font-family:'Liberation Mono',monospace;letter-spacing:-0.011px;"><span style="color:#262626">[</span><span style="color:#2215cf">0</span><span style="color:#262626">].length - </span><span style="color:#2215cf">1</span><span style="color:#262626">; j++) {</span></div>
<div class="t" style="left:854.45px;top:368.07px;font-size:11px;color:#8e8e8e;font-family:'Liberation Mono',monospace;letter-spacing:-0.550px;">425</div>
<div class="t" style="left:854.45px;top:383.82px;font-size:11px;color:#8e8e8e;font-family:'Liberation Mono',monospace;letter-spacing:-0.550px;">426</div>
<div class="t" style="left:854.45px;top:399.57px;font-size:11px;color:#8e8e8e;font-family:'Liberation Mono',monospace;letter-spacing:-0.550px;">427</div>
<div class="t" style="left:884.80px;top:398.93px;font-size:13.4px;color:#222;font-family:'Liberation Mono',monospace;letter-spacing:-0.011px;"><span style="color:#262626">          corr = </span><span style="color:#c8502e">`${</span><span style="color:#262626">dataset[i][</span><span style="color:#2215cf">0</span><span style="color:#262626">][j] +</span></div>
<div class="t" style="left:884.80px;top:414.68px;font-size:13.4px;color:#222;font-family:'Liberation Mono',monospace;letter-spacing:-0.011px;"><span style="color:#262626">dataset[i][</span><span style="color:#2215cf">0</span><span style="color:#262626">][j+</span><span style="color:#2215cf">1</span><span style="color:#262626">]</span><span style="color:#c8502e">}`</span><span style="color:#262626">;</span></div>
<div class="t" style="left:854.45px;top:431.07px;font-size:11px;color:#8e8e8e;font-family:'Liberation Mono',monospace;letter-spacing:-0.550px;">428</div>
<div class="t" style="left:854.45px;top:446.82px;font-size:11px;color:#8e8e8e;font-family:'Liberation Mono',monospace;letter-spacing:-0.550px;">429</div>
<div class="t" style="left:884.80px;top:446.18px;font-size:13.4px;color:#222;font-family:'Liberation Mono',monospace;letter-spacing:-0.011px;"><span style="color:#262626">          </span><span style="color:#aa3a9e">if</span><span style="color:#262626"> (!temp.includes(corr)) {</span></div>
<div class="t" style="left:854.45px;top:462.57px;font-size:11px;color:#8e8e8e;font-family:'Liberation Mono',monospace;letter-spacing:-0.550px;">430</div>
<div class="t" style="left:884.80px;top:461.93px;font-size:13.4px;color:#222;font-family:'Liberation Mono',monospace;letter-spacing:-0.011px;"><span style="color:#262626">            top[corr] += dataset[i][</span><span style="color:#2215cf">1</span><span style="color:#262626">] == </span><span style="color:#2215cf">1</span></div>
<div class="t" style="left:884.80px;top:477.68px;font-size:13.4px;color:#222;font-family:'Liberation Mono',monospace;letter-spacing:-0.011px;"><span style="color:#262626">? </span><span style="color:#2215cf">1</span><span style="color:#262626"> : -</span><span style="color:#2215cf">1</span><span style="color:#262626">;</span></div>
<div class="t" style="left:854.45px;top:494.07px;font-size:11px;color:#8e8e8e;font-family:'Liberation Mono',monospace;letter-spacing:-0.550px;">431</div>
<div class="t" style="left:884.80px;top:493.43px;font-size:13.4px;color:#222;font-family:'Liberation Mono',monospace;letter-spacing:-0.011px;"><span style="color:#262626">          }</span></div>
<div class="t" style="left:854.45px;top:509.82px;font-size:11px;color:#8e8e8e;font-family:'Liberation Mono',monospace;letter-spacing:-0.550px;">432</div>
<div class="t" style="left:854.45px;top:525.57px;font-size:11px;color:#8e8e8e;font-family:'Liberation Mono',monospace;letter-spacing:-0.550px;">433</div>
<div class="t" style="left:854.45px;top:541.32px;font-size:11px;color:#8e8e8e;font-family:'Liberation Mono',monospace;letter-spacing:-0.550px;">434</div>
<div class="t" style="left:854.45px;top:557.07px;font-size:11px;color:#8e8e8e;font-family:'Liberation Mono',monospace;letter-spacing:-0.550px;">435</div>
<div class="t" style="left:854.45px;top:572.82px;font-size:11px;color:#8e8e8e;font-family:'Liberation Mono',monospace;letter-spacing:-0.550px;">436</div>
<div class="t" style="left:854.45px;top:588.57px;font-size:11px;color:#8e8e8e;font-family:'Liberation Mono',monospace;letter-spacing:-0.550px;">437</div>
<div class="t" style="left:854.45px;top:604.32px;font-size:11px;color:#fff;font-family:'Liberation Mono',monospace;letter-spacing:-0.550px;">438</div>
<div class="t" style="left:884.80px;top:619.43px;font-size:13.4px;color:#222;font-family:'Liberation Mono',monospace;letter-spacing:-0.011px;"><span style="color:#262626">                              (key) {</span></div>
<div class="t" style="left:854.45px;top:635.82px;font-size:11px;color:#8e8e8e;font-family:'Liberation Mono',monospace;letter-spacing:-0.550px;">439</div>
<div class="t" style="left:884.80px;top:635.18px;font-size:13.4px;color:#222;font-family:'Liberation Mono',monospace;letter-spacing:-0.011px;"><span style="color:#262626">                              ;</span></div>
<div class="t" style="left:854.45px;top:651.57px;font-size:11px;color:#8e8e8e;font-family:'Liberation Mono',monospace;letter-spacing:-0.550px;">440</div>
<div class="t" style="left:854.45px;top:667.32px;font-size:11px;color:#8e8e8e;font-family:'Liberation Mono',monospace;letter-spacing:-0.550px;">441</div>
<div class="t" style="left:854.45px;top:683.07px;font-size:11px;color:#8e8e8e;font-family:'Liberation Mono',monospace;letter-spacing:-0.550px;">442</div>
<div class="t" style="left:884.80px;top:682.43px;font-size:13.4px;color:#222;font-family:'Liberation Mono',monospace;letter-spacing:-0.011px;"><span style="color:#007400">                              on the second</span></div>
<div class="t" style="left:854.45px;top:714.57px;font-size:11px;color:#8e8e8e;font-family:'Liberation Mono',monospace;letter-spacing:-0.550px;">443</div>
<div class="t" style="left:884.80px;top:713.93px;font-size:13.4px;color:#222;font-family:'Liberation Mono',monospace;letter-spacing:-0.011px;"><span style="color:#262626">                             rst, second) {</span></div>
<div class="t" style="left:854.45px;top:730.32px;font-size:11px;color:#8e8e8e;font-family:'Liberation Mono',monospace;letter-spacing:-0.550px;">444</div>
<div class="t" style="left:884.80px;top:729.68px;font-size:13.4px;color:#222;font-family:'Liberation Mono',monospace;letter-spacing:-0.011px;"><span style="color:#262626">                             rst[</span><span style="color:#2215cf">1</span><span style="color:#262626">];</span></div>
<div class="t" style="left:854.45px;top:746.07px;font-size:11px;color:#8e8e8e;font-family:'Liberation Mono',monospace;letter-spacing:-0.550px;">445</div>
<div class="t" style="left:854.45px;top:761.82px;font-size:11px;color:#8e8e8e;font-family:'Liberation Mono',monospace;letter-spacing:-0.550px;">446</div>
<div class="t" style="left:854.45px;top:777.57px;font-size:11px;color:#8e8e8e;font-family:'Liberation Mono',monospace;letter-spacing:-0.550px;">447</div>
<div class="t" style="left:854.45px;top:793.32px;font-size:11px;color:#8e8e8e;font-family:'Liberation Mono',monospace;letter-spacing:-0.550px;">448</div>
<div class="t" style="left:854.45px;top:809.07px;font-size:11px;color:#8e8e8e;font-family:'Liberation Mono',monospace;letter-spacing:-0.550px;">449</div>
<div class="t" style="left:884.80px;top:824.18px;font-size:13.4px;color:#222;font-family:'Liberation Mono',monospace;letter-spacing:-0.011px;"><span style="color:#c41a16">                             d&quot;</span><span style="color:#262626">);</span></div>
<div class="t" style="left:854.45px;top:840.57px;font-size:11px;color:#8e8e8e;font-family:'Liberation Mono',monospace;letter-spacing:-0.550px;">450</div>
<div class="t" style="left:854.45px;top:856.32px;font-size:11px;color:#8e8e8e;font-family:'Liberation Mono',monospace;letter-spacing:-0.550px;">451</div>
<div class="a" style="left:1233.5px;top:129px;width:1px;height:729px;background:#dcdcdc"></div>
<div class="a" style="left:479px;top:858.2px;width:1057px;height:34px;background:linear-gradient(180deg,#fbfbfb,#f7f7f7 50%,#e9e9e9);border-top:1px solid #d8d8d8"></div>
<svg style="left:0;top:0" width="1" height="1"><polyline points="489,872.5 494.5,877.5 489,882.5" fill="none" stroke="#2f6de0" stroke-width="2" stroke-linecap="round" stroke-linejoin="round"/></svg>
<div class="a" style="left:865.7px;top:515.3px;width:256.79999999999995px;height:351.0px;border-radius:9px;box-shadow:0 1.5px 3px rgba(0,0,0,0.25)"></div>
<svg style="left:0;top:0" width="1" height="1"><path d="M866.7,524.3 A9,9 0 0 1 875.7,515.3 H980.4 L993.6,485.5 L1007.3,515.3 H1112.5 A9,9 0 0 1 1121.5,524.3 V855.3 A9,9 0 0 1 1112.5,864.3 H875.7 A9,9 0 0 1 866.7,855.3 Z" fill="#f4f4f4" stroke="#9c9c9c" stroke-width="1.6"/></svg>
<div class="t" style="left:880.70px;top:504.66px;font-size:13.4px;color:#111;font-weight:700;letter-spacing:0.143px;">Object</div>
<div class="a" style="left:873px;top:524.3px;width:242px;height:1px;background:#e2e2e2"></div>
<div class="a" style="left:866.7px;top:525px;width:254.79999999999995px;height:338.10px;overflow:hidden">
<div class="a" style="left:26.70px;top:4.90px;width:16.3px;height:16.3px;border-radius:2.5px;background:#93b0d3;border:1px solid #6c8fba;color:#fff;font-size:13.5px;font-weight:400;line-height:14.3px;text-align:center">N</div>
<div class="t" style="left:48.70px;top:6.36px;font-size:13.4px;color:#262626;letter-spacing:0.3px">aa:</div>
<div class="t" style="left:72.63px;top:7.43px;font-size:13.4px;font-family:'Liberation Mono',monospace;color:#2215cf;letter-spacing:-0.011px">0</div>
<div class="a" style="left:26.70px;top:24.27px;width:16.3px;height:16.3px;border-radius:2.5px;background:#93b0d3;border:1px solid #6c8fba;color:#fff;font-size:13.5px;font-weight:400;line-height:14.3px;text-align:center">N</div>
<div class="t" style="left:48.70px;top:25.73px;font-size:13.4px;color:#262626;letter-spacing:0.3px">ab:</div>
<div class="t" style="left:72.63px;top:26.81px;font-size:13.4px;font-family:'Liberation Mono',monospace;color:#2215cf;letter-spacing:-0.011px">1</div>
<div class="a" style="left:26.70px;top:43.65px;width:16.3px;height:16.3px;border-radius:2.5px;background:#93b0d3;border:1px solid #6c8fba;color:#fff;font-size:13.5px;font-weight:400;line-height:14.3px;text-align:center">N</div>
<div class="t" style="left:48.70px;top:45.11px;font-size:13.4px;color:#262626;letter-spacing:0.3px">ac:</div>
<div class="t" style="left:71.88px;top:46.18px;font-size:13.4px;font-family:'Liberation Mono',monospace;color:#2215cf;letter-spacing:-0.011px">0</div>
<div class="a" style="left:26.70px;top:63.02px;width:16.3px;height:16.3px;border-radius:2.5px;background:#93b0d3;border:1px solid #6c8fba;color:#fff;font-size:13.5px;font-weight:400;line-height:14.3px;text-align:center">N</div>
<div class="t" style="left:48.70px;top:64.48px;font-size:13.4px;color:#262626;letter-spacing:0.3px">ad:</div>
<div class="t" style="left:72.63px;top:65.56px;font-size:13.4px;font-family:'Liberation Mono',monospace;color:#2215cf;letter-spacing:-0.011px">1</div>
<div class="a" style="left:26.70px;top:82.40px;width:16.3px;height:16.3px;border-radius:2.5px;background:#93b0d3;border:1px solid #6c8fba;color:#fff;font-size:13.5px;font-weight:400;line-height:14.3px;text-align:center">N</div>
<div class="t" style="left:48.70px;top:83.86px;font-size:13.4px;color:#262626;letter-spacing:0.3px">ae:</div>
<div class="t" style="left:72.63px;top:84.93px;font-size:13.4px;font-family:'Liberation Mono',monospace;color:#2215cf;letter-spacing:-0.011px">0</div>
<div class="a" style="left:26.70px;top:101.78px;width:16.3px;height:16.3px;border-radius:2.5px;background:#93b0d3;border:1px solid #6c8fba;color:#fff;font-size:13.5px;font-weight:400;line-height:14.3px;text-align:center">N</div>
<div class="t" style="left:48.70px;top:103.23px;font-size:13.4px;color:#262626;letter-spacing:0.3px">af:</div>
<div class="t" style="left:68.90px;top:104.31px;font-size:13.4px;font-family:'Liberation Mono',monospace;color:#2215cf;letter-spacing:-0.011px">0</div>
<div class="a" style="left:26.70px;top:121.15px;width:16.3px;height:16.3px;border-radius:2.5px;background:#93b0d3;border:1px solid #6c8fba;color:#fff;font-size:13.5px;font-weight:400;line-height:14.3px;text-align:center">N</div>
<div class="t" style="left:48.70px;top:122.61px;font-size:13.4px;color:#262626;letter-spacing:0.3px">ag:</div>
<div class="t" style="left:72.63px;top:123.68px;font-size:13.4px;font-family:'Liberation Mono',monospace;color:#2215cf;letter-spacing:-0.011px">-1</div>
<div class="a" style="left:26.70px;top:140.53px;width:16.3px;height:16.3px;border-radius:2.5px;background:#93b0d3;border:1px solid #6c8fba;color:#fff;font-size:13.5px;font-weight:400;line-height:14.3px;text-align:center">N</div>
<div class="t" style="left:48.70px;top:141.98px;font-size:13.4px;color:#262626;letter-spacing:0.3px">ah:</div>
<div class="t" style="left:72.63px;top:143.06px;font-size:13.4px;font-family:'Liberation Mono',monospace;color:#2215cf;letter-spacing:-0.011px">0</div>
<div class="a" style="left:26.70px;top:159.90px;width:16.3px;height:16.3px;border-radius:2.5px;background:#93b0d3;border:1px solid #6c8fba;color:#fff;font-size:13.5px;font-weight:400;line-height:14.3px;text-align:center">N</div>
<div class="t" style="left:48.70px;top:161.36px;font-size:13.4px;color:#262626;letter-spacing:0.3px">ai:</div>
<div class="t" style="left:68.15px;top:162.43px;font-size:13.4px;font-family:'Liberation Mono',monospace;color:#2215cf;letter-spacing:-0.011px">0</div>
<div class="a" style="left:26.70px;top:179.28px;width:16.3px;height:16.3px;border-radius:2.5px;background:#93b0d3;border:1px solid #6c8fba;color:#fff;font-size:13.5px;font-weight:400;line-height:14.3px;text-align:center">N</div>
<div class="t" style="left:48.70px;top:180.73px;font-size:13.4px;color:#262626;letter-spacing:0.3px">ba:</div>
<div class="t" style="left:72.63px;top:181.81px;font-size:13.4px;font-family:'Liberation Mono',monospace;color:#2215cf;letter-spacing:-0.011px">0</div>
<div class="a" style="left:26.70px;top:198.65px;width:16.3px;height:16.3px;border-radius:2.5px;background:#93b0d3;border:1px solid #6c8fba;color:#fff;font-size:13.5px;font-weight:400;line-height:14.3px;text-align:center">N</div>
<div class="t" style="left:48.70px;top:200.11px;font-size:13.4px;color:#262626;letter-spacing:0.3px">bb:</div>
<div class="t" style="left:72.63px;top:201.18px;font-size:13.4px;font-family:'Liberation Mono',monospace;color:#2215cf;letter-spacing:-0.011px">0</div>
<div class="a" style="left:26.70px;top:218.03px;width:16.3px;height:16.3px;border-radius:2.5px;background:#93b0d3;border:1px solid #6c8fba;color:#fff;font-size:13.5px;font-weight:400;line-height:14.3px;text-align:center">N</div>
<div class="t" style="left:48.70px;top:219.48px;font-size:13.4px;color:#262626;letter-spacing:0.3px">bc:</div>
<div class="t" style="left:71.88px;top:220.56px;font-size:13.4px;font-family:'Liberation Mono',monospace;color:#2215cf;letter-spacing:-0.011px">0</div>
<div class="a" style="left:26.70px;top:237.40px;width:16.3px;height:16.3px;border-radius:2.5px;background:#93b0d3;border:1px solid #6c8fba;color:#fff;font-size:13.5px;font-weight:400;line-height:14.3px;text-align:center">N</div>
<div class="t" style="left:48.70px;top:238.86px;font-size:13.4px;color:#262626;letter-spacing:0.3px">bd:</div>
<div class="t" style="left:72.63px;top:239.93px;font-size:13.4px;font-family:'Liberation Mono',monospace;color:#2215cf;letter-spacing:-0.011px">0</div>
<div class="a" style="left:26.70px;top:256.77px;width:16.3px;height:16.3px;border-radius:2.5px;background:#93b0d3;border:1px solid #6c8fba;color:#fff;font-size:13.5px;font-weight:400;line-height:14.3px;text-align:center">N</div>
<div class="t" style="left:48.70px;top:258.23px;font-size:13.4px;color:#262626;letter-spacing:0.3px">be:</div>
<div class="t" style="left:72.63px;top:259.31px;font-size:13.4px;font-family:'Liberation Mono',monospace;color:#2215cf;letter-spacing:-0.011px">0</div>
<div class="a" style="left:26.70px;top:276.15px;width:16.3px;height:16.3px;border-radius:2.5px;background:#93b0d3;border:1px solid #6c8fba;color:#fff;font-size:13.5px;font-weight:400;line-height:14.3px;text-align:center">N</div>
<div class="t" style="left:48.70px;top:277.61px;font-size:13.4px;color:#262626;letter-spacing:0.3px">bf:</div>
<div class="t" style="left:68.90px;top:278.68px;font-size:13.4px;font-family:'Liberation Mono',monospace;color:#2215cf;letter-spacing:-0.011px">0</div>
<div class="a" style="left:26.70px;top:295.52px;width:16.3px;height:16.3px;border-radius:2.5px;background:#93b0d3;border:1px solid #6c8fba;color:#fff;font-size:13.5px;font-weight:400;line-height:14.3px;text-align:center">N</div>
<div class="t" style="left:48.70px;top:296.98px;font-size:13.4px;color:#262626;letter-spacing:0.3px">bg:</div>
<div class="t" style="left:72.63px;top:298.06px;font-size:13.4px;font-family:'Liberation Mono',monospace;color:#2215cf;letter-spacing:-0.011px">1</div>
<div class="a" style="left:26.70px;top:314.90px;width:16.3px;height:16.3px;border-radius:2.5px;background:#93b0d3;border:1px solid #6c8fba;color:#fff;font-size:13.5px;font-weight:400;line-height:14.3px;text-align:center">N</div>
<div class="t" style="left:48.70px;top:316.36px;font-size:13.4px;color:#262626;letter-spacing:0.3px">bh:</div>
<div class="t" style="left:72.63px;top:317.43px;font-size:13.4px;font-family:'Liberation Mono',monospace;color:#2215cf;letter-spacing:-0.011px">0</div>
<div class="a" style="left:26.70px;top:334.27px;width:16.3px;height:16.3px;border-radius:2.5px;background:#93b0d3;border:1px solid #6c8fba;color:#fff;font-size:13.5px;font-weight:400;line-height:14.3px;text-align:center">N</div>
<div class="t" style="left:48.70px;top:335.73px;font-size:13.4px;color:#262626;letter-spacing:0.3px">bi:</div>
<div class="t" style="left:68.15px;top:336.81px;font-size:13.4px;font-family:'Liberation Mono',monospace;color:#2215cf;letter-spacing:-0.011px">0</div>
</div>
<div class="a" style="left:1234.5px;top:129px;width:301.5px;height:729px;background:#f5f5f5"></div>
<div class="a" style="left:1235px;top:180.6px;width:301px;height:1px;background:#e0e0e0"></div>
<div class="a" style="left:1235px;top:276.9px;width:301px;height:1px;background:#e0e0e0"></div>
<div class="a" style="left:1235px;top:305.5px;width:301px;height:1px;background:#e0e0e0"></div>
<svg style="left:0;top:0" width="1" height="1"><polygon points="1242.2,139.1 1252.6000000000001,139.1 1247.4,148.1" fill="#8b8b8b"/></svg>
<div class="t" style="left:1260.70px;top:136.06px;font-size:13.4px;color:#3a3a3a;font-weight:700;letter-spacing:0.278px;">Watch Expressions</div>
<svg style="left:0;top:0" width="1" height="1"><path d="M1464,145 H1478.5 M1471.25,137.8 V152.2" stroke="#6a6a6a" stroke-width="1.3"/><path d="M1489.6,140.6 H1501.8 M1493.5,140.6 V138.6 H1497.9 V140.6 M1490.8,140.6 L1491.6,152.4 H1499.8 L1500.6,140.6 M1493.4,144.2 L1497.9,148.8 M1497.9,144.2 L1493.4,148.8" fill="none" stroke="#9a9a9a" stroke-width="1.1"/><path d="M1525.8,146.2 A6.2,6.2 0 1 1 1521.6,139.6" fill="none" stroke="#8a8a8a" stroke-width="1.3"/><polyline points="1519.3,137.2 1522.3,139.7 1519.5,142.5" fill="none" stroke="#8a8a8a" stroke-width="1.3"/></svg>
<div class="t" style="left:1320.90px;top:158.70px;font-size:12.4px;color:#8c8c8c;letter-spacing:0.289px;">No Watch Expressions</div>
<svg style="left:0;top:0" width="1" height="1"><polygon points="1242.2,190.3 1252.6000000000001,190.3 1247.4,199.3" fill="#8b8b8b"/></svg>
<div class="t" style="left:1260.70px;top:187.36px;font-size:13.4px;color:#3a3a3a;font-weight:700;letter-spacing:0.305px;">Local Variables</div>
<div class="a" style="left:1262.6px;top:211px;width:16.6px;height:16.6px;border-radius:2.5px;background:#dedede;border:1px solid #a8a8a8;color:#9a9a9a;font-family:'Liberation Sans',sans-serif;font-size:13px;font-weight:400;line-height:14.600000000000001px;text-align:center;">?</div>
<div class="a" style="left:1262.6px;top:211px;width:16.6px;height:16.6px;color:#fff;font-size:13px;line-height:15px;text-align:center;font-weight:400"></div>
<div class="t" style="left:1284.40px;top:212.86px;font-size:13.4px;color:#262626;letter-spacing:0.976px;">items:</div>
<div class="t" style="left:1330.60px;top:213.93px;font-size:13.4px;color:#8a8a8a;font-family:'Liberation Mono',monospace;letter-spacing:-0.041px;">undefined</div>
<svg style="left:0;top:0" width="1" height="1"><polygon points="1247,234.2 1256,239.39999999999998 1247,244.6" fill="#8b8b8b"/></svg>
<div class="a" style="left:1262.6px;top:231.2px;width:16.6px;height:16.6px;border-radius:2.5px;background:#f2d58e;border:1px solid #d8b560;color:#fff;font-family:'Liberation Sans',sans-serif;font-size:13px;font-weight:700;line-height:14.600000000000001px;text-align:center;">O</div>
<div class="t" style="left:1284.40px;top:231.96px;font-size:13.4px;color:#262626;letter-spacing:1.213px;">this:</div>
<div class="t" style="left:1317.50px;top:233.03px;font-size:13.4px;color:#222;font-family:'Liberation Mono',monospace;letter-spacing:-0.041px;"><span style="color:#262626">Window {</span><span style="color:#a03aa0">steal</span><span style="color:#262626">: </span><span style="color:#c41a16">&quot;ab&quot;</span><span style="color:#262626">, </span><span style="color:#a03aa0">encoding</span></div>
<svg style="left:0;top:0" width="1" height="1"><polygon points="1247,254.6 1256,259.8 1247,265.0" fill="#8b8b8b"/></svg>
<div class="a" style="left:1262.6px;top:251.7px;width:16.6px;height:16.6px;border-radius:2.5px;background:#f2d58e;border:1px solid #d8b560;color:#fff;font-family:'Liberation Sans',sans-serif;font-size:13px;font-weight:700;line-height:14.600000000000001px;text-align:center;">O</div>
<div class="t" style="left:1284.40px;top:252.66px;font-size:13.4px;color:#262626;letter-spacing:1.359px;">top:</div>
<div class="t" style="left:1315.50px;top:253.73px;font-size:13.4px;color:#222;font-family:'Liberation Mono',monospace;letter-spacing:-0.041px;"><span style="color:#262626">{</span><span style="color:#a03aa0">aa</span><span style="color:#262626">: </span><span style="color:#2215cf">0</span><span style="color:#262626">, </span><span style="color:#a03aa0">ab</span><span style="color:#262626">: </span><span style="color:#2215cf">1</span><span style="color:#262626">, </span><span style="color:#a03aa0">ac</span><span style="color:#262626">: </span><span style="color:#2215cf">0</span><span style="color:#262626">, </span><span style="color:#a03aa0">ad</span><span style="color:#262626">: </span><span style="color:#2215cf">1</span><span style="color:#262626">, </span><span style="color:#a03aa0">ae</span></div>
<svg style="left:0;top:0" width="1" height="1"><polygon points="1243,285.9 1252,291.09999999999997 1243,296.29999999999995" fill="#8b8b8b"/></svg>
<div class="t" style="left:1260.70px;top:283.76px;font-size:13.4px;color:#3a3a3a;font-weight:700;letter-spacing:0.342px;">Global Variables</div>
<div class="a" style="left:1233.7px;top:129px;width:1px;height:729px;background:#d8d8d8"></div>
<svg style="left:0;top:0" width="1536" height="892"><path d="M491.4,69.3 L505.7,83.4 M505.7,69.3 L491.4,83.4" stroke="#5c5c5c" stroke-width="1.25" fill="none"/><rect x="518.6" y="68.7" width="18" height="15.5" fill="none" stroke="#5c5c5c" stroke-width="1.3"/><path d="M518.6,78 H536.6" stroke="#5c5c5c" stroke-width="1.3"/><path d="M552.5,79.2 H547.8 V68.7 H560.8 V72.9" fill="none" stroke="#5c5c5c" stroke-width="1.3"/><rect x="552.8" y="73.2" width="12.8" height="11" fill="none" stroke="#5c5c5c" stroke-width="1.3"/><circle cx="585.6" cy="76.3" r="7" fill="none" stroke="#5c5c5c" stroke-width="1.3"/><path d="M585.6,66.4 V74.3 M585.6,78.3 V85.9 M576,76.3 H583.6 M587.6,76.3 H595.3" stroke="#5c5c5c" stroke-width="1.3"/><rect x="625.3" y="68.9" width="15.4" height="5.9" fill="none" stroke="#777" stroke-width="1.2"/><rect x="625.3" y="79.7" width="5.9" height="4.8" fill="none" stroke="#777" stroke-width="1.2"/><rect x="634.9" y="79.7" width="5.9" height="4.8" fill="none" stroke="#777" stroke-width="1.2"/><path d="M628.8,74.8 V79.7 M637.3,74.8 V79.7" stroke="#777" stroke-width="1.2"/><rect x="732.9" y="67.8" width="18.4" height="18.2" rx="3" fill="none" stroke="#777" stroke-width="1.2"/><path d="M736.6,71.7 L741.4,76.9 L736.6,82 M742.6,72.5 H747 M743.2,77 H747 M742.6,81.1 H747.4" fill="none" stroke="#777" stroke-width="1.2"/><path d="M841.5,84.4 H837.8 V68.9 H846.5 L851,73.4 V76" fill="none" stroke="#3b3b3b" stroke-width="1.2"/><path d="M846.5,69.6 L850.3,73.4 H846.5 Z" fill="#3b3b3b"/><circle cx="847.3" cy="81.1" r="5" fill="#d6d6d6" stroke="#3b3b3b" stroke-width="1.2"/><path d="M846,78.8 V83.4 M848.6,78.8 V83.4" stroke="#3b3b3b" stroke-width="1.1"/><circle cx="946.7" cy="76.6" r="9.1" fill="none" stroke="#777" stroke-width="1.2"/><path d="M943.5,68 V80.6 M940.9,78 L943.5,80.8 L946.1,78 M949.4,85.3 V72.6 M946.8,75.2 L949.4,72.4 L952,75.2" fill="none" stroke="#777" stroke-width="1.2"/><circle cx="1050.6" cy="76.6" r="9.1" fill="none" stroke="#777" stroke-width="1.2"/><path d="M1051.5,70.6 V77.6 H1047" fill="none" stroke="#777" stroke-width="1.2"/><ellipse cx="1162" cy="71.8" rx="7.3" ry="2.4" fill="none" stroke="#777" stroke-width="1.2"/><path d="M1154.8,75 A7.3,2.4 0 0 0 1169.3,75 M1154.8,80.8 A7.3,2.4 0 0 0 1169.3,80.8" fill="none" stroke="#777" stroke-width="1.2"/><path d="M1154.8,72.2 A7.3,2.6 0 0 0 1154.8,77.6 M1169.3,72.2 A7.3,2.6 0 0 1 1169.3,77.6 M1154.8,77.8 A7.3,2.6 0 0 0 1154.8,83.2 M1169.3,77.8 A7.3,2.6 0 0 1 1169.3,83.2" fill="none" stroke="#777" stroke-width="0"/><path d="M1155.3,73.6 Q1154,75.2 1155.3,76.6 M1168.8,73.6 Q1170,75.2 1168.8,76.6 M1155.3,79.3 Q1154,81 1155.3,82.4 M1168.8,79.3 Q1170,81 1168.8,82.4" fill="none" stroke="#777" stroke-width="1.2"/><rect x="1254.7" y="70.3" width="15.5" height="13" fill="none" stroke="#777" stroke-width="1.3"/><path d="M1256.5,81.4 L1260,75.8 L1263.2,80 L1266,77 L1268.3,81.4 Z" fill="#777"/><path d="M1364.4,79.2 H1362.9 V69.1 H1373 V71" fill="none" stroke="#777" stroke-width="1.2"/><path d="M1366.8,81.5 H1365 V71.5 H1375.3 V73.3" fill="none" stroke="#777" stroke-width="1.2"/><rect x="1367.6" y="73.9" width="10.5" height="10" fill="none" stroke="#777" stroke-width="1.2"/><path d="M1450.4,72 L1455.2,76.8 L1450.4,81.6 M1456.4,72 L1461.2,76.8 L1456.4,81.6" fill="none" stroke="#5c5c5c" stroke-width="1.3"/><circle cx="1484.7" cy="74.5" r="4.5" fill="none" stroke="#5c5c5c" stroke-width="1.3"/><path d="M1487.9,77.8 L1493,82.8" stroke="#5c5c5c" stroke-width="1.3"/><polygon points="1516.03,71.63 1516.10,68.88 1518.30,68.88 1518.37,71.63 1519.96,72.29 1521.95,70.39 1523.51,71.95 1521.61,73.94 1522.27,75.53 1525.02,75.60 1525.02,77.80 1522.27,77.87 1521.61,79.46 1523.51,81.45 1521.95,83.01 1519.96,81.11 1518.37,81.77 1518.30,84.52 1516.10,84.52 1516.03,81.77 1514.44,81.11 1512.45,83.01 1510.89,81.45 1512.79,79.46 1512.13,77.87 1509.38,77.80 1509.38,75.60 1512.13,75.53 1512.79,73.94 1510.89,71.95 1512.45,70.39 1514.44,72.29" fill="none" stroke="#5c5c5c" stroke-width="1.2" stroke-linejoin="round"/><circle cx="1517.2" cy="76.7" r="2.6" fill="none" stroke="#5c5c5c" stroke-width="1.2"/><path d="M573.6,106.4 H585.6 L590.8,111.9 L585.6,117.4 H573.6 A1.2,1.2 0 0 1 572.4,116.2 V107.6 A1.2,1.2 0 0 1 573.6,106.4 Z" fill="#3478f6"/><rect x="604.7" y="106" width="3.6" height="12.2" fill="none" stroke="#5c5c5c" stroke-width="1.2"/><path d="M612.1,106 L621.3,112.2 L612.1,118.4 Z" fill="none" stroke="#5c5c5c" stroke-width="1.2" stroke-linejoin="miter"/><path d="M636.4,113.4 L644.3,105.8 L651.8,113" fill="none" stroke="#5c5c5c" stroke-width="1.2"/><path d="M648,113.2 H652.2 V109" fill="none" stroke="#5c5c5c" stroke-width="1.2"/><rect x="639.8" y="115.5" width="9.6" height="2.7" fill="none" stroke="#5c5c5c" stroke-width="1.2"/><path d="M675.9,104.2 V113 M672.4,109.8 L675.9,113.3 L679.4,109.8" fill="none" stroke="#5c5c5c" stroke-width="1.2"/><rect x="671.1" y="115.5" width="9.6" height="2.7" fill="none" stroke="#5c5c5c" stroke-width="1.2"/><path d="M707.5,113.4 V104.8 M704,108.2 L707.5,104.7 L711,108.2" fill="none" stroke="#5c5c5c" stroke-width="1.2"/><rect x="702.6" y="115.5" width="9.6" height="2.7" fill="none" stroke="#5c5c5c" stroke-width="1.2"/><path d="M732.2,108.9 H745.6 M742.3,105.5 L745.8,108.9 L742.3,112.3" fill="none" stroke="#5c5c5c" stroke-width="1.2"/><rect x="734.2" y="115.5" width="9.6" height="2.7" fill="none" stroke="#5c5c5c" stroke-width="1.2"/><rect x="851.6" y="103.6" width="13.2" height="15.6" fill="none" stroke="#3478f6" stroke-width="1.3"/><rect x="853.8" y="105.6" width="2.2" height="11.2" fill="#3478f6"/><path d="M874.7,102.5 V121" stroke="#dedede" stroke-width="1"/><polyline points="894.6,105.9 886.7,111.8 894.6,117.8" fill="none" stroke="#4a4a4a" stroke-width="1.8"/><polyline points="918.4,105.9 926,111.8 918.4,117.8" fill="none" stroke="#9c9c9c" stroke-width="1.8"/><path d="M945.6,102.1 H954.4 L959.4,107.1 V120.1 H945.6 Z" fill="#eeeeee" stroke="#555" stroke-width="1"/><path d="M954.4,102.1 V107.1 H959.4" fill="none" stroke="#555" stroke-width="1"/><path d="M950.6,112.5 L948.2,115 L950.6,117.5 M954.4,112.5 L956.8,115 L954.4,117.5" fill="none" stroke="#2f6de0" stroke-width="1.1"/><polyline points="971,104.5 975.6,111.2 971,117.6" fill="none" stroke="#b0b0b0" stroke-width="1"/><rect x="983.6" y="103.7" width="15.8" height="15.6" rx="2.5" fill="#8eadd6" stroke="#6a8fc2" stroke-width="1"/><path d="M991.5,106.6 V114.5 M988,111.2 L991.5,114.8 L995,111.2" fill="none" stroke="#fff" stroke-width="2"/><path d="M1053,109.9 L1056.1,106.1 L1059.2,109.9 M1053,112.6 L1056.1,116.4 L1059.2,112.6" fill="none" stroke="#555" stroke-width="1.2"/><rect x="1084.9" y="103.8" width="8.6" height="11" fill="none" stroke="#4a4a4a" stroke-width="1.2"/><path d="M1088.3,106.9 H1094.5 L1098.1,110.5 V119.7 H1088.3 Z" fill="#4a4a4a"/><path d="M1093.6,107.6 L1097.4,111.4 H1093.6 Z" fill="#fff"/><path d="M1119.6,104.6 H1118 Q1116.9,104.6 1116.9,105.8 V110.4 Q1116.9,111.8 1115.9,112 Q1116.9,112.2 1116.9,113.6 V118.2 Q1116.9,119.4 1118,119.4 H1119.6 M1125.6,104.6 H1127.2 Q1128.3,104.6 1128.3,105.8 V110.4 Q1128.3,111.8 1129.3,112 Q1128.3,112.2 1128.3,113.6 V118.2 Q1128.3,119.4 1127.2,119.4 H1125.6" fill="none" stroke="#4a4a4a" stroke-width="1.3"/><rect x="1146.8" y="103.7" width="14.3" height="15.5" rx="2.5" fill="none" stroke="#a5a5a5" stroke-width="1.1"/><path d="M1150.5,108 H1157.4 M1154,108 V115.6" stroke="#a5a5a5" stroke-width="1.2"/><rect x="1178.6" y="103.7" width="13.7" height="15.5" rx="2.5" fill="none" stroke="#a5a5a5" stroke-width="1.1"/><path d="M1188.3,108.4 A3.6,3.8 0 1 0 1188.3,114.4" fill="none" stroke="#a5a5a5" stroke-width="1.2"/><path d="M1201.5,102.5 V121" stroke="#dedede" stroke-width="1"/><rect x="1211" y="103.7" width="13.4" height="15.6" fill="none" stroke="#3478f6" stroke-width="1.3"/><rect x="1220.2" y="105.8" width="2" height="11.2" fill="#3478f6"/></svg>
<div class="t" style="left:1005.30px;top:104.86px;font-size:13.4px;color:#222;letter-spacing:-0.291px;">Resp…</div>
<div class="a" style="left:0;top:0;width:2px;height:2px;background:#6f94c9;border-radius:0 0 2px 0"></div>
<svg style="left:0;top:0" width="1" height="1"><path d="M1527,0 L1536,0 L1536,4 Q1533,1 1527,0 Z" fill="#9a9a9a" opacity="0.6"/><path d="M0,888.5 Q1.2,890.2 2,892 L0,892 Z" fill="#1d2d44"/></svg>
</body></html>
